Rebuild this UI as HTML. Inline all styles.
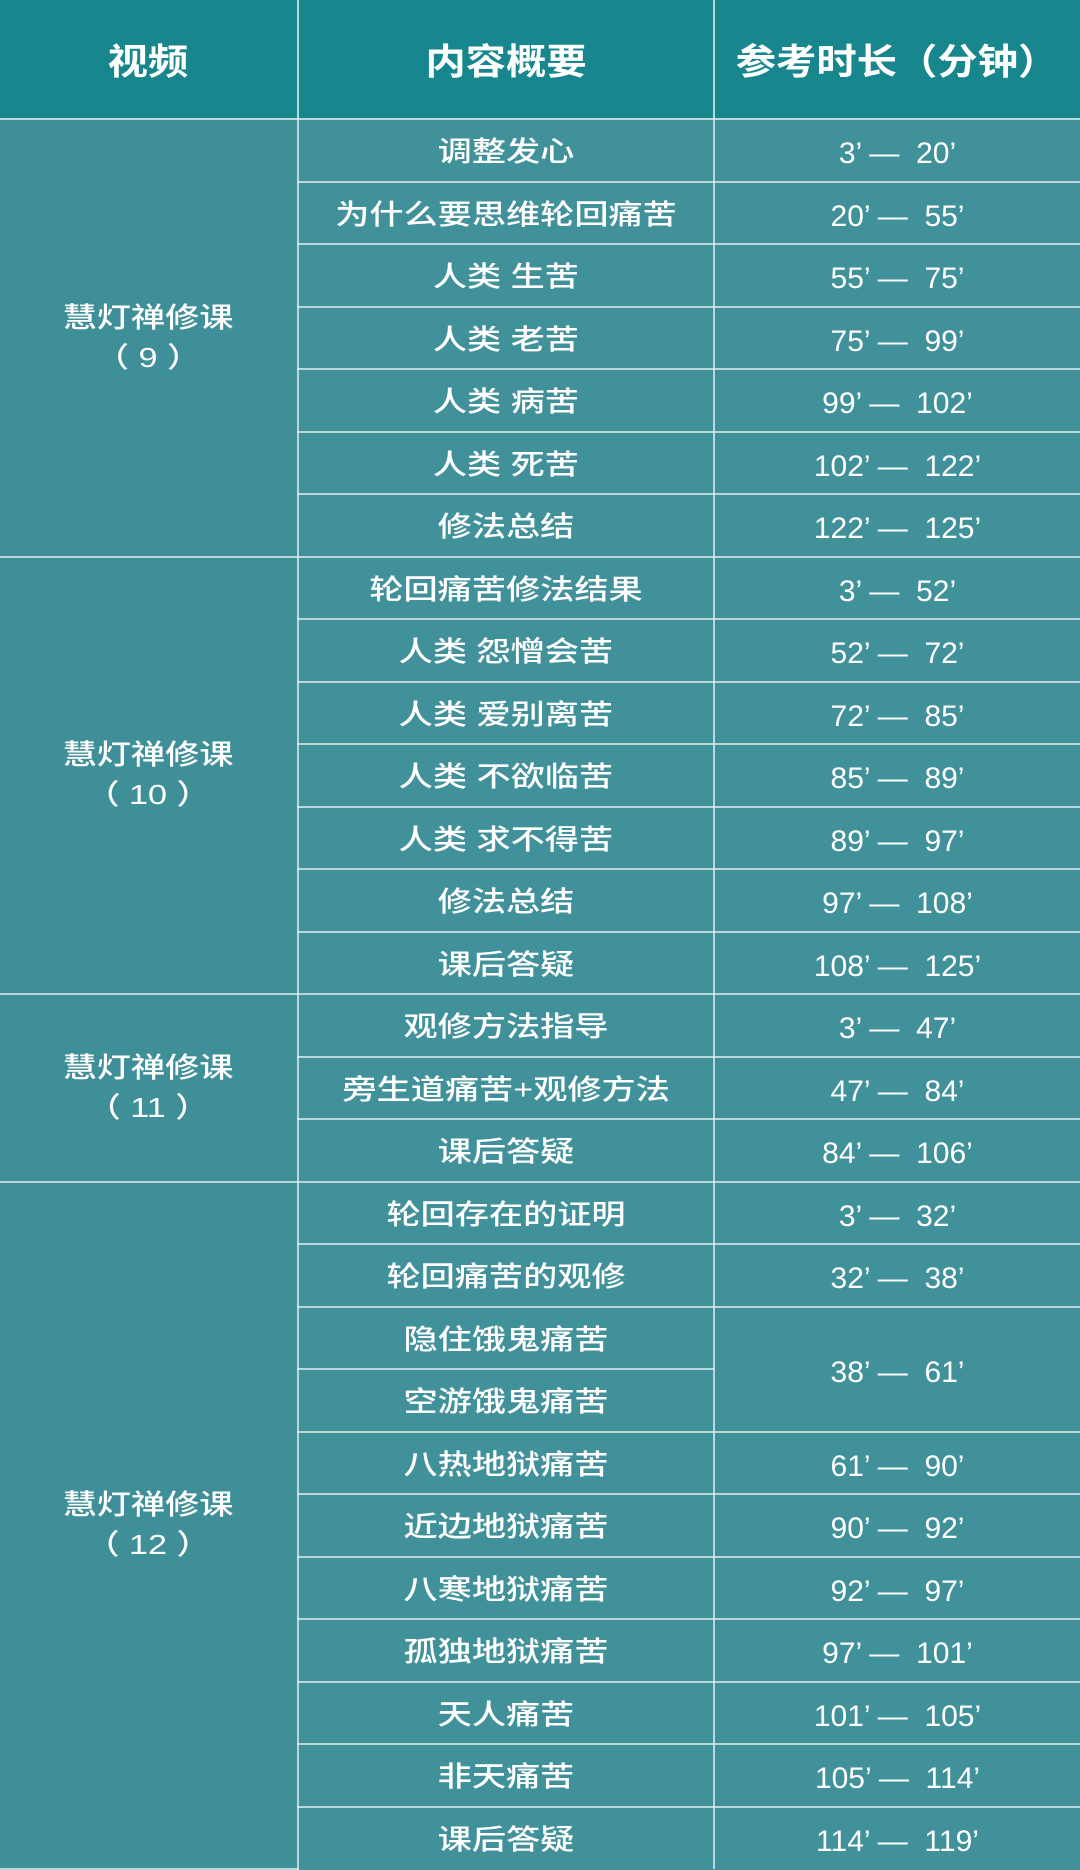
<!DOCTYPE html>
<html><head><meta charset="utf-8"><style>
html,body{margin:0;padding:0;background:#41909a;}
table{width:1080px;border-collapse:collapse;table-layout:fixed;font-family:"Liberation Sans","Noto Sans CJK SC",sans-serif;color:#fff;}
td,th{border:2px solid rgba(225,240,240,0.75);text-align:center;vertical-align:middle;padding:0;overflow:hidden;}
tr{height:62.5px;}
th{background:#17868d;height:118px;font-weight:700;font-size:36px;}
td{background:#41919a;font-size:28px;font-weight:500;}
td.l{background:#3f8f98;}
span{display:inline-block;transform:scaleX(1.22);white-space:nowrap;}
td:nth-child(n) span.n{transform:scaleX(1.0);font-size:30px;position:relative;top:4px;}
th span{transform:scaleX(1.12);}
tr>*:first-child{border-left:none}
tr>*:last-child{border-right:none}
tr:first-child th{border-top:none}
tr:last-child td{border-bottom:none}
</style></head><body>
<table>
<colgroup><col style="width:298px"><col style="width:416px"><col style="width:366px"></colgroup>
<tr><th><span>视频</span></th><th><span>内容概要</span></th><th><span>参考时长（分钟）</span></th></tr>
<tr><td class="l" rowspan="7"><span style="line-height:40px">慧灯禅修课<br>（ 9 ）</span></td><td><span>调整发心</span></td><td><span class="n">3’ —&nbsp; 20’</span></td></tr>
<tr><td><span>为什么要思维轮回痛苦</span></td><td><span class="n">20’ —&nbsp; 55’</span></td></tr>
<tr><td><span>人类 生苦</span></td><td><span class="n">55’ —&nbsp; 75’</span></td></tr>
<tr><td><span>人类 老苦</span></td><td><span class="n">75’ —&nbsp; 99’</span></td></tr>
<tr><td><span>人类 病苦</span></td><td><span class="n">99’ —&nbsp; 102’</span></td></tr>
<tr><td><span>人类 死苦</span></td><td><span class="n">102’ —&nbsp; 122’</span></td></tr>
<tr><td><span>修法总结</span></td><td><span class="n">122’ —&nbsp; 125’</span></td></tr>
<tr><td class="l" rowspan="7"><span style="line-height:40px">慧灯禅修课<br>（ 10 ）</span></td><td><span>轮回痛苦修法结果</span></td><td><span class="n">3’ —&nbsp; 52’</span></td></tr>
<tr><td><span>人类 怨憎会苦</span></td><td><span class="n">52’ —&nbsp; 72’</span></td></tr>
<tr><td><span>人类 爱别离苦</span></td><td><span class="n">72’ —&nbsp; 85’</span></td></tr>
<tr><td><span>人类 不欲临苦</span></td><td><span class="n">85’ —&nbsp; 89’</span></td></tr>
<tr><td><span>人类 求不得苦</span></td><td><span class="n">89’ —&nbsp; 97’</span></td></tr>
<tr><td><span>修法总结</span></td><td><span class="n">97’ —&nbsp; 108’</span></td></tr>
<tr><td><span>课后答疑</span></td><td><span class="n">108’ —&nbsp; 125’</span></td></tr>
<tr><td class="l" rowspan="3"><span style="line-height:40px">慧灯禅修课<br>（ 11 ）</span></td><td><span>观修方法指导</span></td><td><span class="n">3’ —&nbsp; 47’</span></td></tr>
<tr><td><span>旁生道痛苦+观修方法</span></td><td><span class="n">47’ —&nbsp; 84’</span></td></tr>
<tr><td><span>课后答疑</span></td><td><span class="n">84’ —&nbsp; 106’</span></td></tr>
<tr><td class="l" rowspan="11"><span style="line-height:40px">慧灯禅修课<br>（ 12 ）</span></td><td><span>轮回存在的证明</span></td><td><span class="n">3’ —&nbsp; 32’</span></td></tr>
<tr><td><span>轮回痛苦的观修</span></td><td><span class="n">32’ —&nbsp; 38’</span></td></tr>
<tr><td><span>隐住饿鬼痛苦</span></td><td rowspan="2"><span class="n">38’ —&nbsp; 61’</span></td></tr>
<tr><td><span>空游饿鬼痛苦</span></td></tr>
<tr><td><span>八热地狱痛苦</span></td><td><span class="n">61’ —&nbsp; 90’</span></td></tr>
<tr><td><span>近边地狱痛苦</span></td><td><span class="n">90’ —&nbsp; 92’</span></td></tr>
<tr><td><span>八寒地狱痛苦</span></td><td><span class="n">92’ —&nbsp; 97’</span></td></tr>
<tr><td><span>孤独地狱痛苦</span></td><td><span class="n">97’ —&nbsp; 101’</span></td></tr>
<tr><td><span>天人痛苦</span></td><td><span class="n">101’ —&nbsp; 105’</span></td></tr>
<tr><td><span>非天痛苦</span></td><td><span class="n">105’ —&nbsp; 114’</span></td></tr>
<tr><td><span>课后答疑</span></td><td><span class="n">114’ —&nbsp; 119’</span></td></tr>
</table>
</body></html>
